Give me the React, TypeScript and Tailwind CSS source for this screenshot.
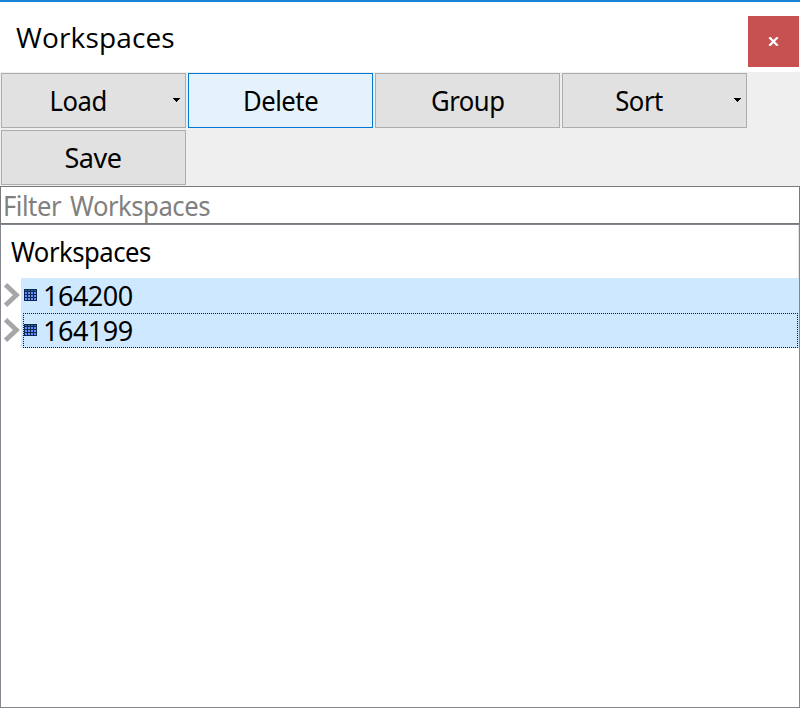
import React from "react";

const uiFont = "font-['Noto_Sans',sans-serif]";

function ToolButton({
  label,
  text = "scale-x-[0.95]",
  menu = false,
  active = false,
}: {
  label: string;
  text?: string;
  menu?: boolean;
  active?: boolean;
}) {
  return (
    <button
      className={`flex h-[55px] w-[185px] items-center border ${
        active ? "border-[#0078d7] bg-[#e5f1fb]" : "border-[#adadad] bg-[#e1e1e1]"
      }`}
    >
      <span className={`flex-1 pt-px text-center text-[27px] leading-[36px] tracking-[-0.5px] ${menu ? "pr-[19px]" : ""}`}>
        <span className={`inline-block ${text}`}>{label}</span>
      </span>
      {menu && (
        <svg className="mr-[5px] mb-[1px] h-[4px] w-[7px] shrink-0" viewBox="0 0 7 4" shapeRendering="crispEdges">
          <path d="M0 0h7v1h-1v1h-1v1h-1v1h-1v-1h-1v-1h-1v-1h-1z" fill="#000" />
        </svg>
      )}
    </button>
  );
}

function GridIcon() {
  return (
    <svg className="-mt-[2px] h-[12px] w-[13px] shrink-0" viewBox="0 0 13 12" shapeRendering="crispEdges">
      <rect width="13" height="12" fill="#0c2a50" />
      {[1, 4, 7, 10].map((x) => (
        <g key={x}>
          <rect x={x} y="1" width="2" height="1" fill="#3565a0" />
          {[3, 6, 9].map((y) => (
            <rect key={y} x={x} y={y} width="2" height="2" fill="#6a8cff" />
          ))}
        </g>
      ))}
    </svg>
  );
}

function TreeRow({ name, focused = false }: { name: string; focused?: boolean }) {
  return (
    <div className="flex h-[35px]">
      <div className="w-[20px] shrink-0 pt-[4px] pl-[2px]">
        <svg className="h-[26px] w-[18px]" viewBox="0 0 18 26" fill="none">
          <path d="M2.5 2.7L13.4 13L2.5 23.3" stroke="#a6a6a6" strokeWidth="4.8" />
        </svg>
      </div>
      <div className="relative flex flex-1 items-center bg-[#cde8ff] pl-[3px]">
        <GridIcon />
        <span className="ml-[6px] pt-px text-[27px] leading-[34px] tracking-[-0.5px]">{name}</span>
        {focused && (
          <svg className="absolute top-0 left-[2px] h-[35px] w-[775px]" shapeRendering="crispEdges" fill="none">
            <path
              d="M0 .5H775M774.5 0V35M0 34.5H775M.5 0V35"
              stroke="#101820"
              strokeDasharray="1 1"
            />
          </svg>
        )}
      </div>
    </div>
  );
}

export default function App() {
  return (
    <div className={`flex h-[708px] w-[800px] flex-col overflow-hidden bg-white text-black ${uiFont}`}>
      <header className="flex h-[72px] shrink-0 items-start justify-between border-t-2 border-[#1883d7] pr-px pl-[16px]">
        <h1 className="pt-[16px] font-['Open_Sans',sans-serif] text-[28px] leading-[38px] tracking-[0.15px]">
          Workspaces
        </h1>
        <button className="mt-[14px] flex h-[51px] w-[51px] items-center justify-center bg-[#c75050]">
          <svg className="h-[9px] w-[11px]" viewBox="0 0 11 9">
            <path d="M1.3 0.3L9.7 8.7M9.7 0.3L1.3 8.7" stroke="#fff" strokeWidth="2.3" />
          </svg>
        </button>
      </header>

      <div className="flex h-[114px] shrink-0 flex-wrap content-start gap-[2px] bg-[#efefef] pt-px pl-px">
        <ToolButton label="Load" menu />
        <ToolButton label="Delete" active />
        <ToolButton label="Group" />
        <ToolButton label="Sort" menu />
        <ToolButton label="Save" text="pr-px" />
      </div>

      <div className="flex h-[38px] shrink-0 items-center border border-[#7a7a7a] pt-[2px] pl-[2px]">
        <span className="origin-left scale-x-[0.95] text-[27px] leading-[34px] tracking-[-0.5px] text-[#808080] [word-spacing:3px]">
          Filter Workspaces
        </span>
      </div>

      <main className="flex-1 border border-[#828790]">
        <div className="h-[53px] border-r border-[#e5e5e5] pt-[9px] pl-[10px]">
          <span className="inline-block origin-left scale-x-[0.95] text-[27px] leading-[36px] tracking-[-0.5px]">
            Workspaces
          </span>
        </div>
        <TreeRow name="164200" />
        <TreeRow name="164199" focused />
      </main>
    </div>
  );
}
